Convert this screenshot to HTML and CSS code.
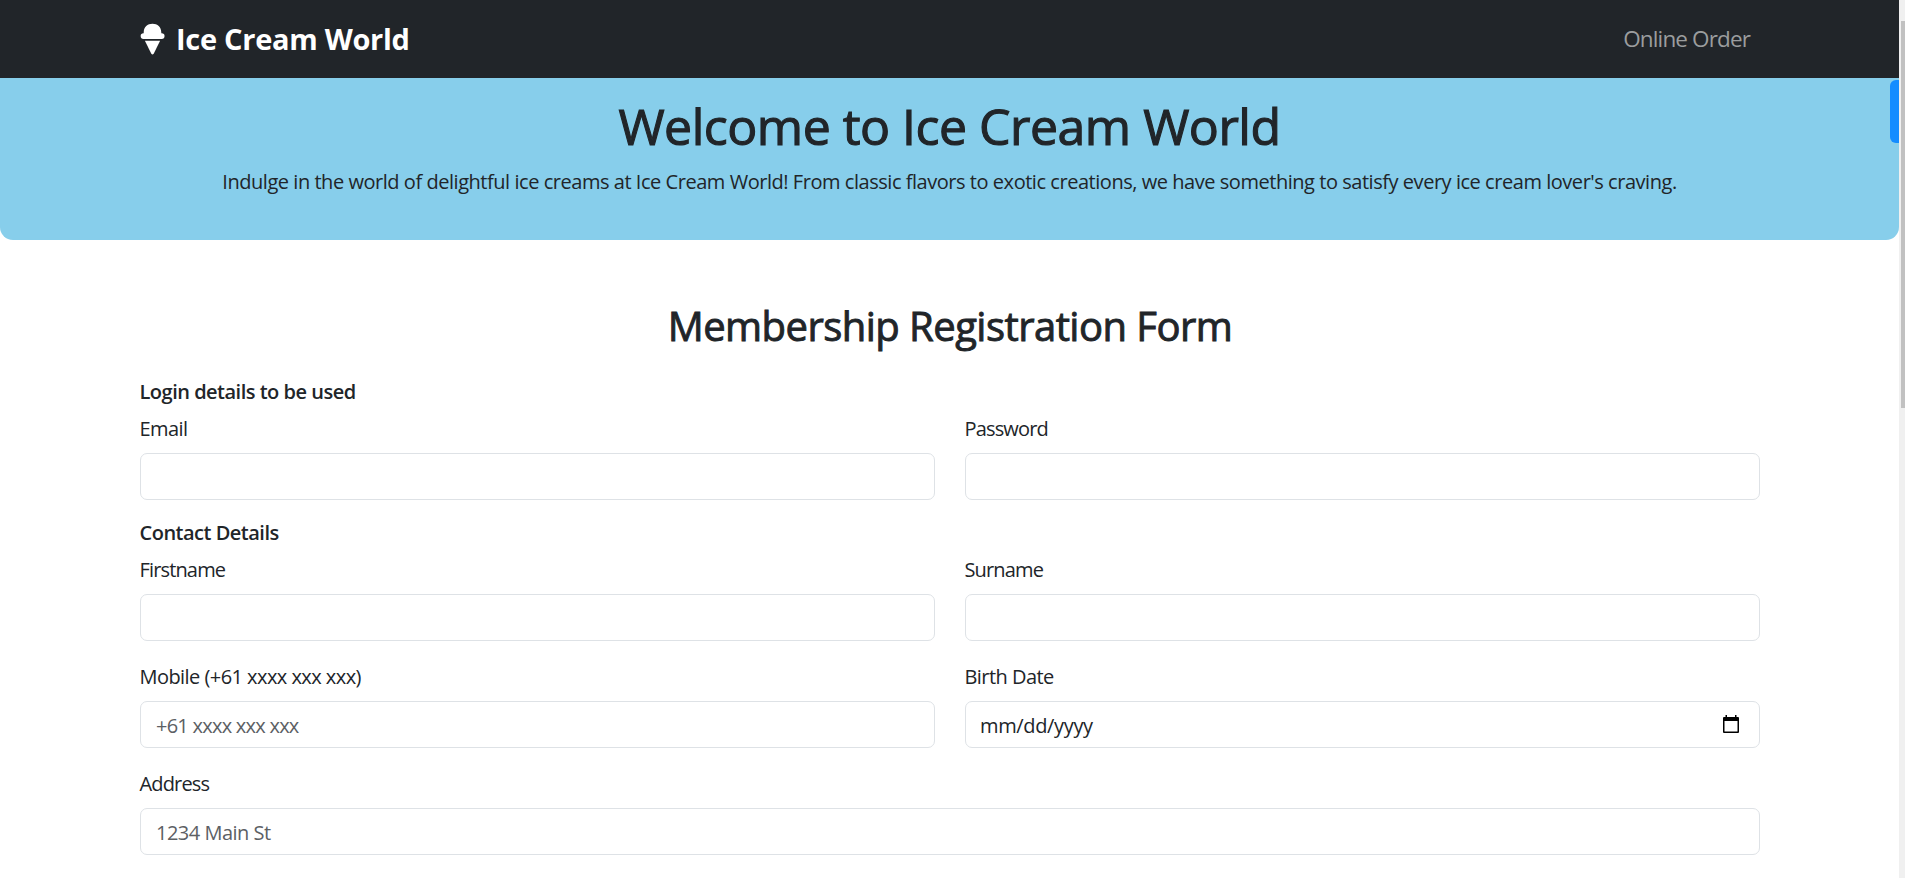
FILE: index.html
```html
<!DOCTYPE html>
<html lang="en">
<head>
<meta charset="utf-8">
<title>Ice Cream World</title>
<link rel="stylesheet" href="styles.css">
</head>
<body>
<div class="window">
  <div class="page">
    <nav class="navbar">
      <a class="brand">
        <svg class="brand-icon" viewBox="0 0 24 32" fill="currentColor" aria-hidden="true">
          <path d="M3.2 9.4C3.2 4 7 0.8 12 0.8s8.8 3.2 8.8 8.6v.8h.4a2.7 2.7 0 0 1 0 5.7H3a2.7 2.7 0 0 1 0-5.7h.2z"/>
          <path d="M4.4 17.7h15.2L13.2 30.8q-1.2 1.6-2.4 0z"/>
        </svg>
        <span class="brand-name">Ice Cream World</span>
      </a>
      <a class="nav-link">Online Order</a>
    </nav>
    <header class="hero">
      <h1 class="hero-title">Welcome to Ice Cream World</h1>
      <p class="hero-text">Indulge in the world of delightful ice creams at Ice Cream World! From classic flavors to exotic creations, we have something to satisfy every ice cream lover's craving.</p>
      <div class="side-tab"></div>
    </header>
    <main class="content">
      <h2 class="form-title">Membership Registration Form</h2>
      <form class="form">
        <div class="section">Login details to be used</div>
        <div class="field"><label class="label">Email</label><div class="control"></div></div>
        <div class="field"><label class="label tight">Password</label><div class="control"></div></div>
        <div class="section">Contact Details</div>
        <div class="field spaced"><label class="label tight">Firstname</label><div class="control"></div></div>
        <div class="field spaced"><label class="label tight">Surname</label><div class="control"></div></div>
        <div class="field spaced"><label class="label">Mobile (+61 xxxx xxx xxx)</label><div class="control placeholder tight">+61 xxxx xxx xxx</div></div>
        <div class="field spaced">
          <label class="label">Birth Date</label>
          <div class="control date">
            <span>mm/dd/yyyy</span>
            <svg class="calendar" viewBox="0 0 16 19" aria-hidden="true">
              <path d="M2.5 0H4v2h8V0h1.500v2H15a1 1 0 0 1 1 1v14a1 1 0 0 1-1 1H1a1 1 0 0 1-1-1V3a1 1 0 0 1 1-1h1.500zM1.500 6v10.500h13V6z" fill-rule="evenodd"/>
            </svg>
          </div>
        </div>
        <div class="field spaced wide"><label class="label tight">Address</label><div class="control placeholder">1234 Main St</div></div>
      </form>
    </main>
  </div>
  <div class="scrollbar"><div class="thumb"></div></div>
</div>
</body>
</html>
```
FILE: styles.css
```css
* { box-sizing: border-box; }
body { margin: 0; overflow: hidden; background: #fff; color: #212529; font: 400 20px/30px "Open Sans", "Noto Sans", sans-serif; }
h1, h2, p { margin: 0; }
.window { display: grid; grid-template-columns: 1899px 6px; height: 878px; }
.page { overflow: hidden; }
.navbar { display: flex; justify-content: space-between; align-items: center; height: 78px; padding: 0 149px 0 140px; background: #212529; }
.brand { display: flex; align-items: center; gap: 11px; color: #fff; font-size: 29px; font-weight: 700; letter-spacing: -0.28px; }
.brand-icon { width: 25px; height: 32px; }
.nav-link { color: #9b9d9e; font-size: 22.5px; letter-spacing: -0.87px; }
.hero { position: relative; height: 162px; padding-top: 18px; background: #87ceeb; border-radius: 0 0 13px 13px; text-align: center; white-space: nowrap; }
.hero-title { font-size: 50px; line-height: 60px; font-weight: 400; letter-spacing: -0.5px; -webkit-text-stroke: 1.1px currentColor; }
.hero-text { margin-top: 11px; letter-spacing: -0.46px; }
.side-tab { position: absolute; top: 2px; right: 0; width: 9px; height: 63px; border-radius: 6px 0 0 6px; background: #148cff; }
.content { padding: 62px 139px 0 140px; }
.form-title { font-size: 40px; line-height: 48px; font-weight: 400; letter-spacing: -0.54px; text-align: center; -webkit-text-stroke: 0.9px currentColor; }
.form { display: grid; grid-template-columns: 1fr 1fr; column-gap: 30px; padding-top: 26px; }
.section { grid-column: 1 / -1; height: 37px; margin-left: -0.5px; padding-top: 1px; font-weight: 600; letter-spacing: -0.5px; }
.label { display: block; margin-left: -0.5px; padding-top: 1px; letter-spacing: -0.55px; }
.control { display: flex; align-items: center; height: 47px; margin: 9px 0 17px; padding: 2px 16px 0 15px; border: 1px solid #dee2e6; border-radius: 7px; letter-spacing: -0.5px; }
.spaced .control { margin-bottom: 20px; }
.label.tight { letter-spacing: -0.85px; }
.control.tight { letter-spacing: -0.75px; }
.spaced .date { justify-content: space-between; padding-right: 20px; padding-left: 14px; letter-spacing: -0.35px; }
.calendar { width: 16px; height: 19px; margin-bottom: 2px; fill: #000; }
.placeholder { color: #5c6064; }
.wide { grid-column: 1 / -1; }
.scrollbar { overflow: hidden; background: #f0f0f0; }
.thumb { height: 387px; margin: 21px 0 0 2px; background: #c1c1c1; }
```
